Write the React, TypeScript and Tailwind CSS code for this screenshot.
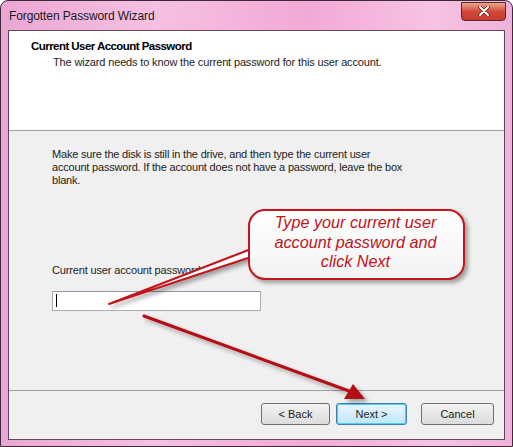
import React from "react";

export default function App() {
  const ui = { fontFamily: '"Liberation Sans", Arial, sans-serif' };
  return (
    <div className="w-[513px] h-[447px] overflow-hidden bg-white">
      <div
        className="relative w-[513px] h-[447px] rounded-t-[8px] border border-[#3d2a38] flex flex-col"
        style={{ ...ui, background: "linear-gradient(90deg,#eba6d3 0%,#f6c0e2 30%,#f3a9d6 60%,#f7c3e4 85%,#f0b0da 100%)" }}
      >
        {/* Title bar */}
        <div className="h-[29px] flex items-center justify-between pl-[8px] pr-[6px]">
          <div className="text-[12px] leading-[14px] text-[#1a1a1a] tracking-[-0.1px]">Forgotten Password Wizard</div>
          <div className="w-[45px] h-[19px] -mt-[9px] rounded-b-[4px] border border-[#5a2a2a] flex items-center justify-center bg-gradient-to-b from-[#e8a58d] via-[#d2493a] to-[#c73a2c]">
            <svg width="12" height="10" viewBox="0 0 12 10">
              <path d="M2 1 L10 9 M10 1 L2 9" stroke="#5a1a1a" strokeWidth="3.4" strokeLinecap="round" />
              <path d="M2 1 L10 9 M10 1 L2 9" stroke="#fff" strokeWidth="2" strokeLinecap="round" />
            </svg>
          </div>
        </div>
        {/* Client area */}
        <div className="mx-[7px] mb-[6px] flex-1 flex flex-col border border-[#5b4a56] bg-[#f0f0f0]">
          {/* Header */}
          <div className="h-[100px] bg-white border-b border-[#a0a0a0] pt-[8px] pl-[22px]">
            <div className="text-[11.5px] leading-[14px] font-bold text-black tracking-[-0.55px]">Current User Account Password</div>
            <div className="text-[11px] leading-[14px] text-[#222] pl-[22px] mt-[2px] tracking-[-0.15px]">The wizard needs to know the current password for this user account.</div>
          </div>
          {/* Body */}
          <div className="flex-1 pl-[43px] pt-[17px]">
            <div className="text-[11px] leading-[13px] text-[#222] tracking-[-0.19px] whitespace-nowrap">
              Make sure the disk is still in the drive, and then type the current user
              <br />
              account password. If the account does not have a password, leave the box
              <br />
              blank.
            </div>
            <div className="text-[11px] text-[#222] mt-[75px] tracking-[-0.15px]">Current user account password:</div>
            <div className="mt-[12px] w-[209px] h-[20px] bg-white border border-[#abadb3] border-t-[#8e9aa8] flex items-center pl-[3px]">
              <div className="w-[1px] h-[13px] bg-black" />
            </div>
          </div>
          {/* Footer */}
          <div className="h-[49px] border-t border-[#a0a0a0] flex items-start justify-end pt-[12px] pr-[10px] gap-[6px]">
            <button className="w-[69px] h-[22px] rounded-[3px] border border-[#707070] bg-gradient-to-b from-[#f2f2f2] to-[#dcdcdc] text-[11px] text-[#222]">&lt; Back</button>
            <button className="w-[71px] h-[22px] rounded-[3px] border border-[#3c7fb1] shadow-[inset_0_0_0_1px_#48d0f5] bg-gradient-to-b from-[#eaf6fd] to-[#bee6fd] text-[11px] text-[#222]">Next &gt;</button>
            <button className="ml-[8px] w-[73px] h-[22px] rounded-[3px] border border-[#707070] bg-gradient-to-b from-[#f2f2f2] to-[#dcdcdc] text-[11px] text-[#222]">Cancel</button>
          </div>
        </div>

        {/* Annotation overlay */}
        <svg className="absolute left-0 top-0 pointer-events-none" width="513" height="447" viewBox="0 0 513 447">
          <defs>
            <filter id="sh" x="-20%" y="-20%" width="140%" height="160%">
              <feDropShadow dx="3" dy="3" stdDeviation="2" floodColor="#000" floodOpacity="0.35" />
            </filter>
            <linearGradient id="cg" x1="0" y1="0" x2="0" y2="1">
              <stop offset="0" stopColor="#ffffff" />
              <stop offset="1" stopColor="#f2f2f2" />
            </linearGradient>
          </defs>
          {/* callout pointer */}
          <g filter="url(#sh)">
            <path d="M250 248 L108 303 L250 256 Z" fill="#fff" stroke="#c0141c" strokeWidth="2" strokeLinejoin="round" />
            <rect x="248" y="209" width="215" height="69" rx="16" fill="url(#cg)" stroke="#c0141c" strokeWidth="2" />
            <rect x="250" y="247" width="4" height="10" fill="#fff" />
          </g>
          {/* arrow */}
          <g filter="url(#sh)">
            <line x1="143" y1="315" x2="348" y2="390" stroke="#b50d15" strokeWidth="3" strokeLinecap="round" />
            <path d="M364 398 L343 398 L352 383 Z" fill="#b50d15" />
          </g>
        </svg>
        <div
          className="absolute left-[252px] top-[212px] w-[205px] text-center text-[16.2px] leading-[19.5px] italic text-[#c0141c]"
          style={ui}
        >
          Type your current user<br />account password and<br />click Next
        </div>
      </div>
    </div>
  );
}
